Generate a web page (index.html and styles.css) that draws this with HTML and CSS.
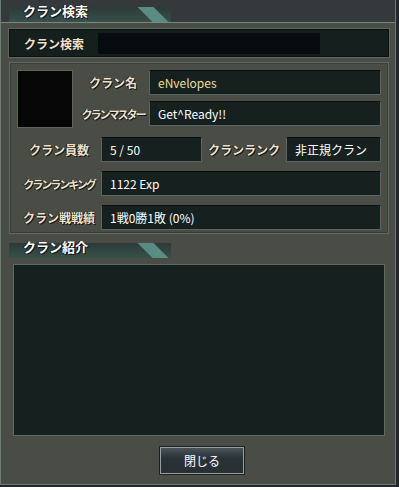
FILE: index.html
```html
<!DOCTYPE html>
<html lang="ja">
<head>
    <meta charset="UTF-8">
    <title>クラン検索</title>
    <link rel="stylesheet" href="styles.css">
</head>
<body>
    <div class="window">
        <div class="titlebar">
            <div class="tab"><span>クラン検索</span></div>
        </div>

        <div class="content">
            <div class="search-row">
                <span class="label">クラン検索</span>
                <div class="search-input"></div>
            </div>

            <div class="info">
                <div class="info-top">
                    <div class="emblem"></div>
                    <div class="name-rows">
                        <div class="row">
                            <span class="label w-name">クラン名</span>
                            <div class="value gold">eNvelopes</div>
                        </div>
                        <div class="row">
                            <span class="label w-name narrow">クランマスター</span>
                            <div class="value">Get^Ready!!</div>
                        </div>
                    </div>
                </div>
                <div class="row">
                    <span class="label w-left">クラン員数</span>
                    <div class="value short">5 / 50</div>
                    <span class="label w-rank">クランランク</span>
                    <div class="value">非正規クラン</div>
                </div>
                <div class="row">
                    <span class="label w-left narrow">クランランキング</span>
                    <div class="value">1122 Exp</div>
                </div>
                <div class="row">
                    <span class="label w-left">クラン戦戦績</span>
                    <div class="value">1戦0勝1敗 (0%)</div>
                </div>
            </div>

            <div class="section-head">
                <div class="tab"><span>クラン紹介</span></div>
            </div>
            <div class="intro"></div>

            <div class="footer">
                <button class="close-btn">閉じる</button>
            </div>
        </div>
    </div>
</body>
</html>
```

FILE: styles.css
```css
body {
    margin: 0;
    background-color: #23262a;
    font-family: 'Noto Sans CJK JP', 'DejaVu Sans', sans-serif;
    color: #ffffff;
}
.window {
    width: 394px;
    height: 484px;
    background-color: #4a4d46;
    border: 1px solid #6c7a76;
    border-top: none;
    display: flex;
    flex-direction: column;
}
.titlebar {
    height: 22px;
    background-color: #36393c;
    border-bottom: 1px solid #7a8884;
    display: flex;
    align-items: flex-end;
    padding-left: 8px;
}
.tab {
    position: relative;
    width: 162px;
    height: 15px;
    background: linear-gradient(to bottom, #2c3a38, #38504a);
}
.tab::after {
    content: '';
    position: absolute;
    left: 136px;
    top: 0;
    width: 16px;
    height: 15px;
    background-color: #5a8c84;
    transform: skewX(45deg);
}
.tab span {
    position: absolute;
    left: 14px;
    top: -6px;
    font-size: 13px;
    font-weight: bold;
    line-height: 20px;
    color: #ffffff;
    text-shadow: 1px 1px 0 #101010, -1px 0 0 #101010;
    z-index: 1;
}
.content {
    flex: 1;
    padding: 6px 6px 0 8px;
    display: flex;
    flex-direction: column;
}
.label {
    font-size: 12px;
    font-weight: bold;
    color: #eee2cc;
    text-shadow: 1px 1px 0 #111, -1px 0 0 #111;
    text-align: center;
    white-space: nowrap;
}
.label.narrow {
    font-size: 11px;
    letter-spacing: -2px;
}
.search-row {
    height: 26px;
    background-color: #15201e;
    border: 1px solid #0b100f;
    box-shadow: 0 0 0 1px #5d6862;
    display: flex;
    align-items: center;
}
.search-row .label {
    width: 88px;
}
.search-input {
    width: 222px;
    height: 21px;
    background-color: #060c10;
}
.info {
    margin-top: 5px;
    border: 1px solid #5f6a64;
    box-shadow: inset 0 0 0 1px #3a3d38;
    padding: 7px 7px 3px 7px;
    display: flex;
    flex-direction: column;
    gap: 9px;
}
.info-top {
    display: flex;
    gap: 4px;
}
.emblem {
    width: 54px;
    height: 56px;
    background-color: #060606;
    border: 1px solid #5c635c;
}
.name-rows {
    flex: 1;
    display: flex;
    flex-direction: column;
    gap: 6px;
}
.row {
    display: flex;
    align-items: center;
    height: 25px;
}
.w-name {
    width: 72px;
}
.w-left {
    width: 84px;
}
.w-rank {
    width: 84px;
}
.value {
    flex: 1;
    height: 23px;
    line-height: 23px;
    background-color: #16201f;
    border: 1px solid #5b6660;
    border-top-color: #0a0e0e;
    padding-left: 8px;
    font-size: 12px;
    color: #ffffff;
}
.value.short {
    flex: 0 0 91px;
}
.value.gold {
    color: #ecdc98;
}
.section-head {
    margin-top: 2px;
    height: 22px;
    display: flex;
    align-items: flex-end;
}
.intro {
    margin: 6px 4px 0 4px;
    height: 170px;
    background-color: #16211f;
    border: 1px solid #5e6a64;
}
.footer {
    display: flex;
    justify-content: center;
    padding-top: 11px;
}
.close-btn {
    width: 84px;
    height: 27px;
    background: linear-gradient(to bottom, #48545a, #2a3236 40%, #283034);
    border: 1px solid #96a09e;
    box-shadow: 0 0 0 1px #1c2022;
    color: #ffffff;
    font-family: 'Noto Sans CJK JP', sans-serif;
    font-size: 12px;
    padding: 0;
    margin-left: 6px;
}
```
